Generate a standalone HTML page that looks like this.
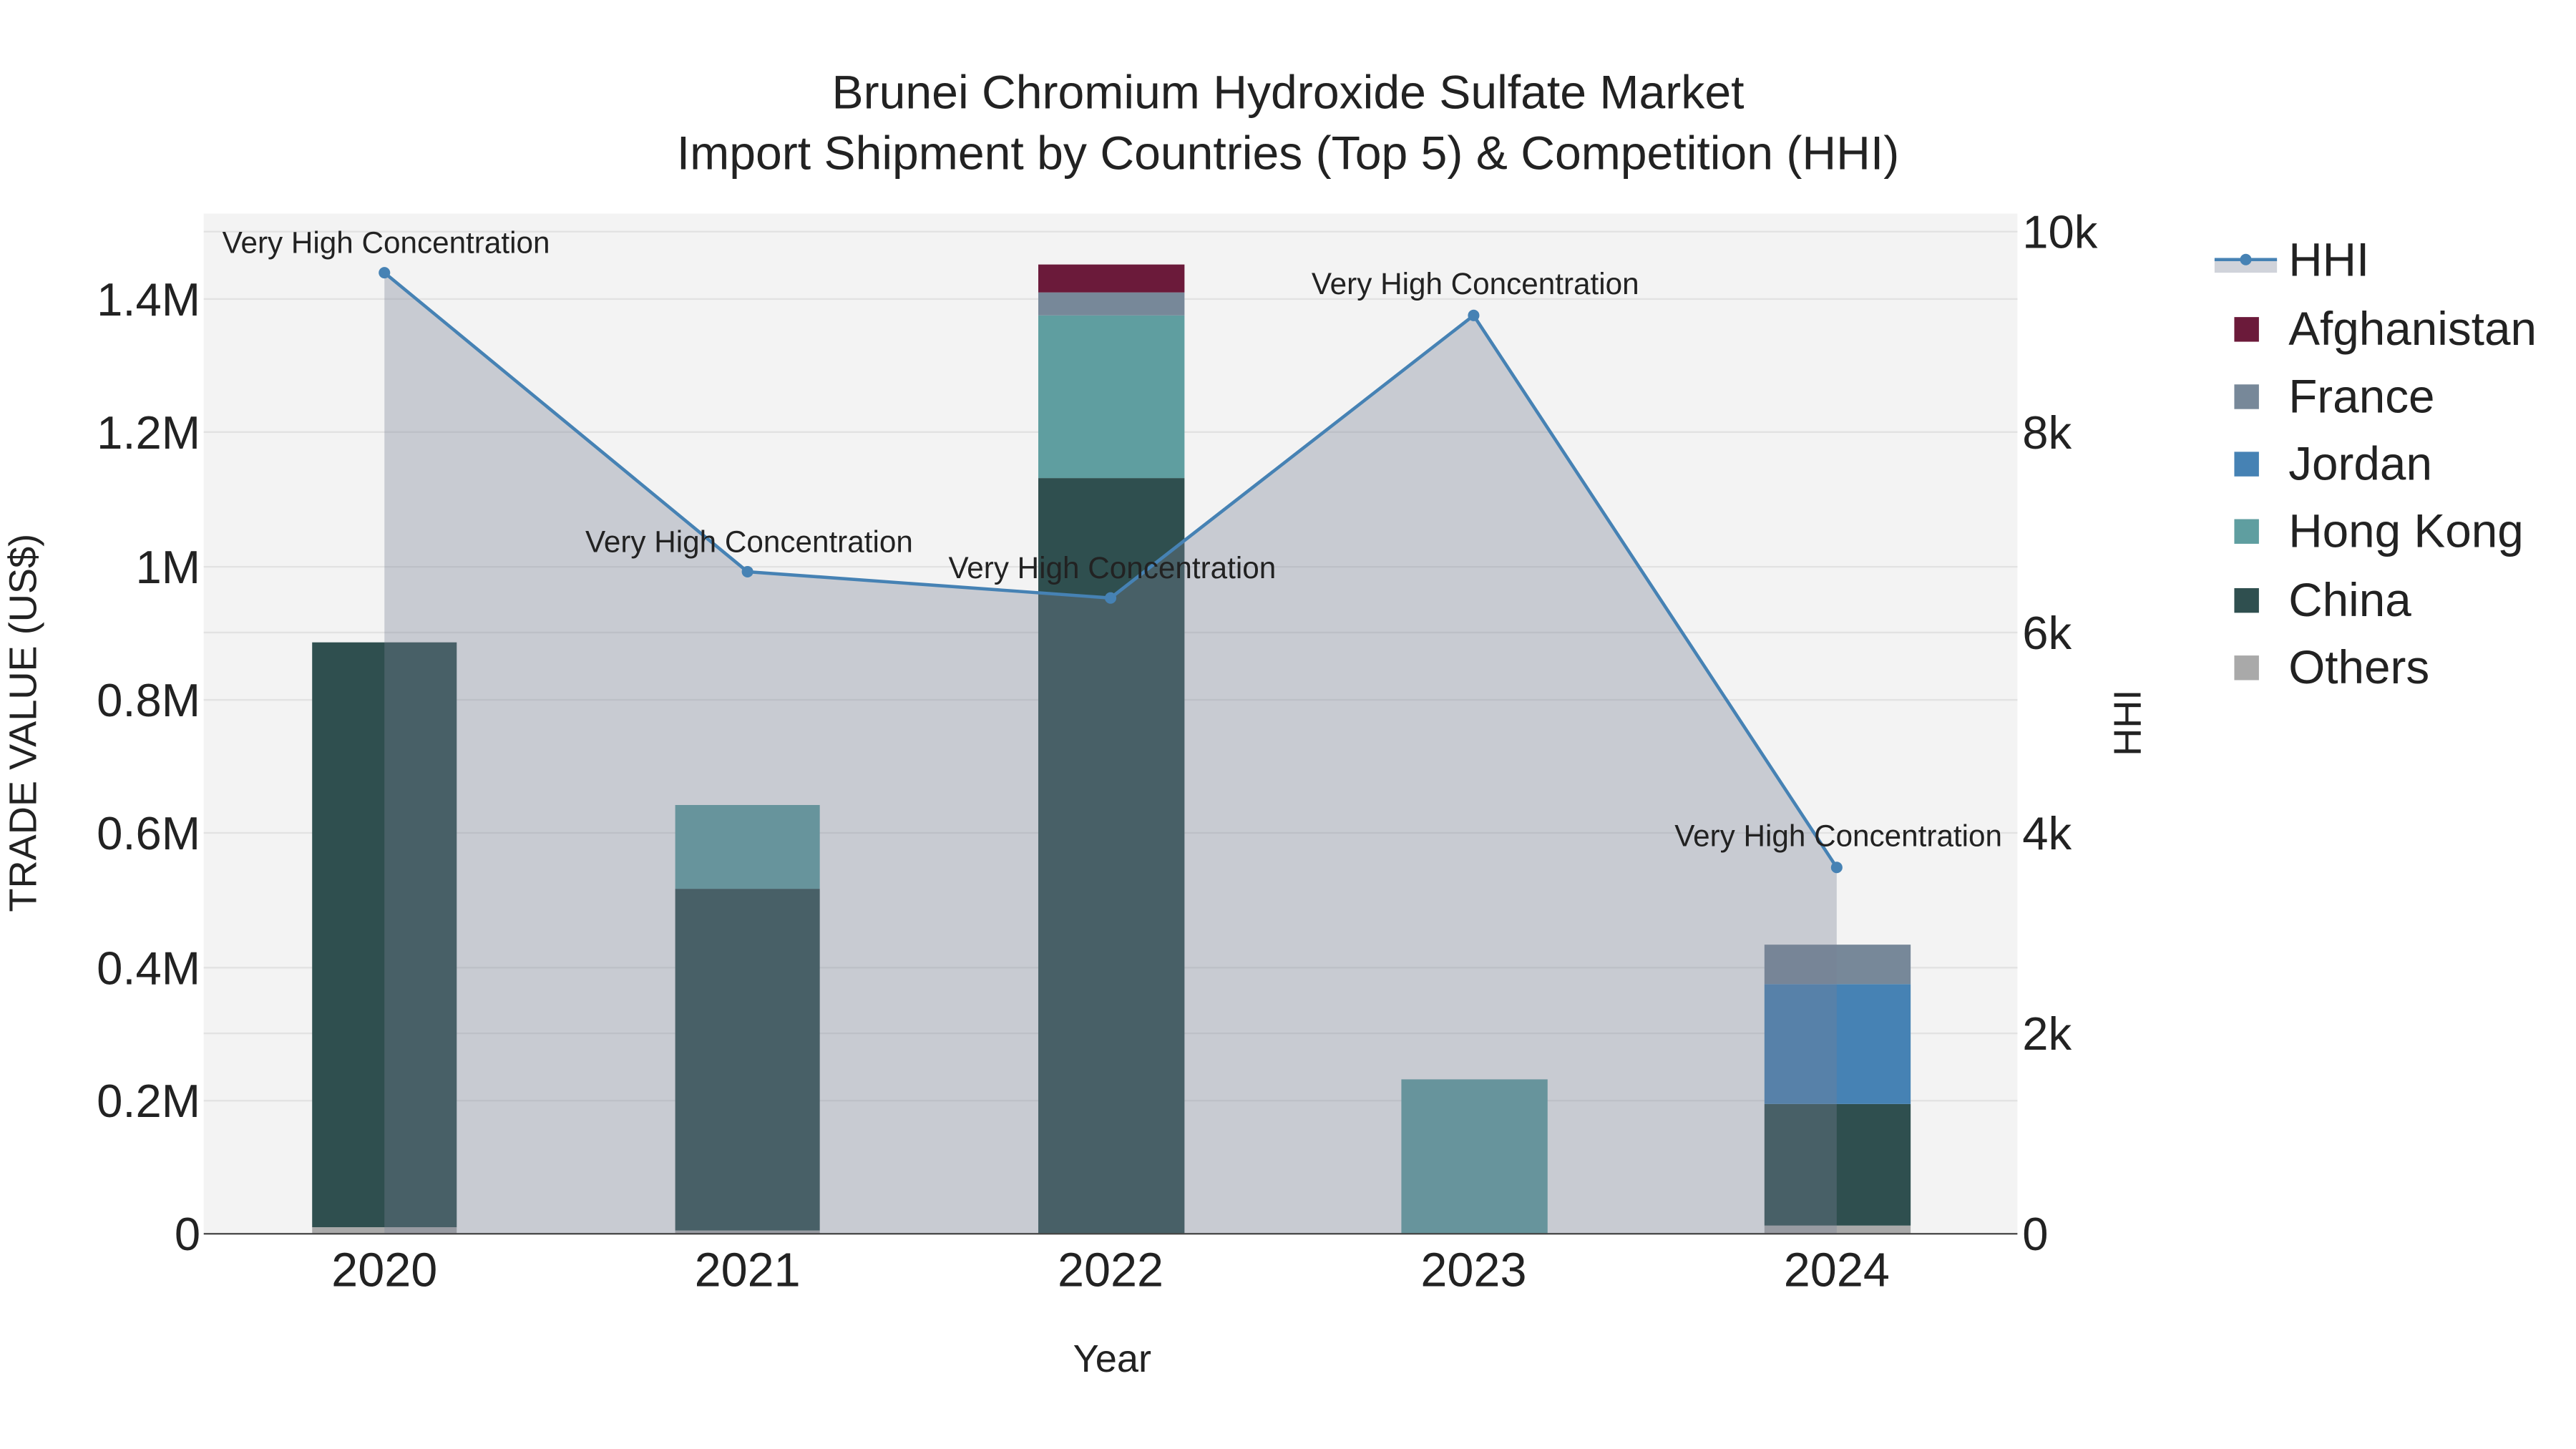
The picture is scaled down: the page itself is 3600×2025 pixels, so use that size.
<!DOCTYPE html>
<html><head><meta charset="utf-8"><style>
html,body{margin:0;padding:0;background:#fff;}
svg{display:block;}
text{font-family:"Liberation Sans",sans-serif;fill:#222;}
</style></head><body>
<svg width="3600" height="2025" viewBox="0 0 1568 882" preserveAspectRatio="none" xmlns="http://www.w3.org/2000/svg">
<rect x="0" y="0" width="1600" height="900" fill="#fff"/>
<rect x="124" y="130" width="1104" height="621" fill="#f3f3f3"/>
<g stroke="#e2e2e2" stroke-width="1">
<line x1="124" x2="1228" y1="670" y2="670"/><line x1="124" x2="1228" y1="589" y2="589"/>
<line x1="124" x2="1228" y1="507" y2="507"/><line x1="124" x2="1228" y1="426" y2="426"/>
<line x1="124" x2="1228" y1="345" y2="345"/><line x1="124" x2="1228" y1="263" y2="263"/>
<line x1="124" x2="1228" y1="182" y2="182"/>
<line x1="124" x2="1228" y1="629" y2="629"/><line x1="124" x2="1228" y1="385" y2="385"/>
<line x1="124" x2="1228" y1="141" y2="141"/>
</g>
<rect x="190" y="747" width="88" height="4" fill="#a9a9a9"/>
<rect x="190" y="391" width="88" height="356" fill="#2f4f4f"/>
<rect x="411" y="749" width="88" height="2" fill="#a9a9a9"/>
<rect x="411" y="541" width="88" height="208" fill="#2f4f4f"/>
<rect x="411" y="490" width="88" height="51" fill="#5f9ea0"/>
<rect x="632" y="291" width="89" height="460" fill="#2f4f4f"/>
<rect x="632" y="192" width="89" height="99" fill="#5f9ea0"/>
<rect x="632" y="178" width="89" height="14" fill="#778899"/>
<rect x="632" y="161" width="89" height="17" fill="#6b1a3a"/>
<rect x="853" y="657" width="89" height="94" fill="#5f9ea0"/>
<rect x="1074" y="746" width="89" height="5" fill="#a9a9a9"/>
<rect x="1074" y="672" width="89" height="74" fill="#2f4f4f"/>
<rect x="1074" y="599" width="89" height="73" fill="#4682b4"/>
<rect x="1074" y="575" width="89" height="24" fill="#778899"/>
<polygon points="234,751 234,166 455,348 676,364 897,192 1118,528 1118,751" fill="rgba(120,130,148,0.35)"/>
<line x1="124" x2="1228" y1="751" y2="751" stroke="#444" stroke-width="1"/>
<polyline points="234,166 455,348 676,364 897,192 1118,528" fill="none" stroke="#4682b4" stroke-width="2"/>
<g fill="#4682b4"><circle cx="234" cy="166" r="3.5"/><circle cx="455" cy="348" r="3.5"/><circle cx="676" cy="364" r="3.5"/><circle cx="897" cy="192" r="3.5"/><circle cx="1118" cy="528" r="3.5"/></g>
<g font-size="18.4" text-anchor="middle">
<text x="235" y="154">Very High Concentration</text>
<text x="456" y="336">Very High Concentration</text>
<text x="677" y="352">Very High Concentration</text>
<text x="898" y="179">Very High Concentration</text>
<text x="1119" y="515">Very High Concentration</text>
</g>
<g font-size="28.8" text-anchor="middle">
<text x="784" y="66">Brunei Chromium Hydroxide Sulfate Market</text>
<text x="784" y="103">Import Shipment by Countries (Top 5) &amp; Competition (HHI)</text>
</g>
<g font-size="28.4" text-anchor="end">
<text x="122" y="761">0</text><text x="122" y="680">0.2M</text><text x="122" y="599">0.4M</text>
<text x="122" y="517">0.6M</text><text x="122" y="436">0.8M</text><text x="122" y="355">1M</text>
<text x="122" y="273">1.2M</text><text x="122" y="192">1.4M</text>
</g>
<g font-size="28.4">
<text x="1231" y="761">0</text><text x="1231" y="639">2k</text><text x="1231" y="517">4k</text>
<text x="1231" y="395">6k</text><text x="1231" y="273">8k</text><text x="1231" y="151">10k</text>
</g>
<g font-size="29" text-anchor="middle">
<text x="234" y="783">2020</text><text x="455" y="783">2021</text><text x="676" y="783">2022</text>
<text x="897" y="783">2023</text><text x="1118" y="783">2024</text>
</g>
<text x="677" y="835" font-size="23.6" text-anchor="middle">Year</text>
<text transform="translate(22,440) rotate(-90)" font-size="23.6" text-anchor="middle">TRADE VALUE (US$)</text>
<text transform="translate(1303,440) rotate(-90)" font-size="23.6" text-anchor="middle">HHI</text>
<rect x="1348" y="158" width="38" height="8" fill="rgba(120,130,148,0.35)"/>
<line x1="1348" x2="1386" y1="158" y2="158" stroke="#4682b4" stroke-width="2"/>
<circle cx="1367" cy="158" r="3.5" fill="#4682b4"/>
<g font-size="28.6">
<text x="1393" y="168">HHI</text>
<text x="1393" y="210">Afghanistan</text>
<text x="1393" y="251">France</text>
<text x="1393" y="292">Jordan</text>
<text x="1393" y="333">Hong Kong</text>
<text x="1393" y="375">China</text>
<text x="1393" y="416">Others</text>
</g>
<rect x="1360" y="193" width="15" height="15" fill="#6b1a3a"/>
<rect x="1360" y="234" width="15" height="15" fill="#778899"/>
<rect x="1360" y="275" width="15" height="15" fill="#4682b4"/>
<rect x="1360" y="316" width="15" height="15" fill="#5f9ea0"/>
<rect x="1360" y="358" width="15" height="15" fill="#2f4f4f"/>
<rect x="1360" y="399" width="15" height="15" fill="#a9a9a9"/>
</svg>
</body></html>
